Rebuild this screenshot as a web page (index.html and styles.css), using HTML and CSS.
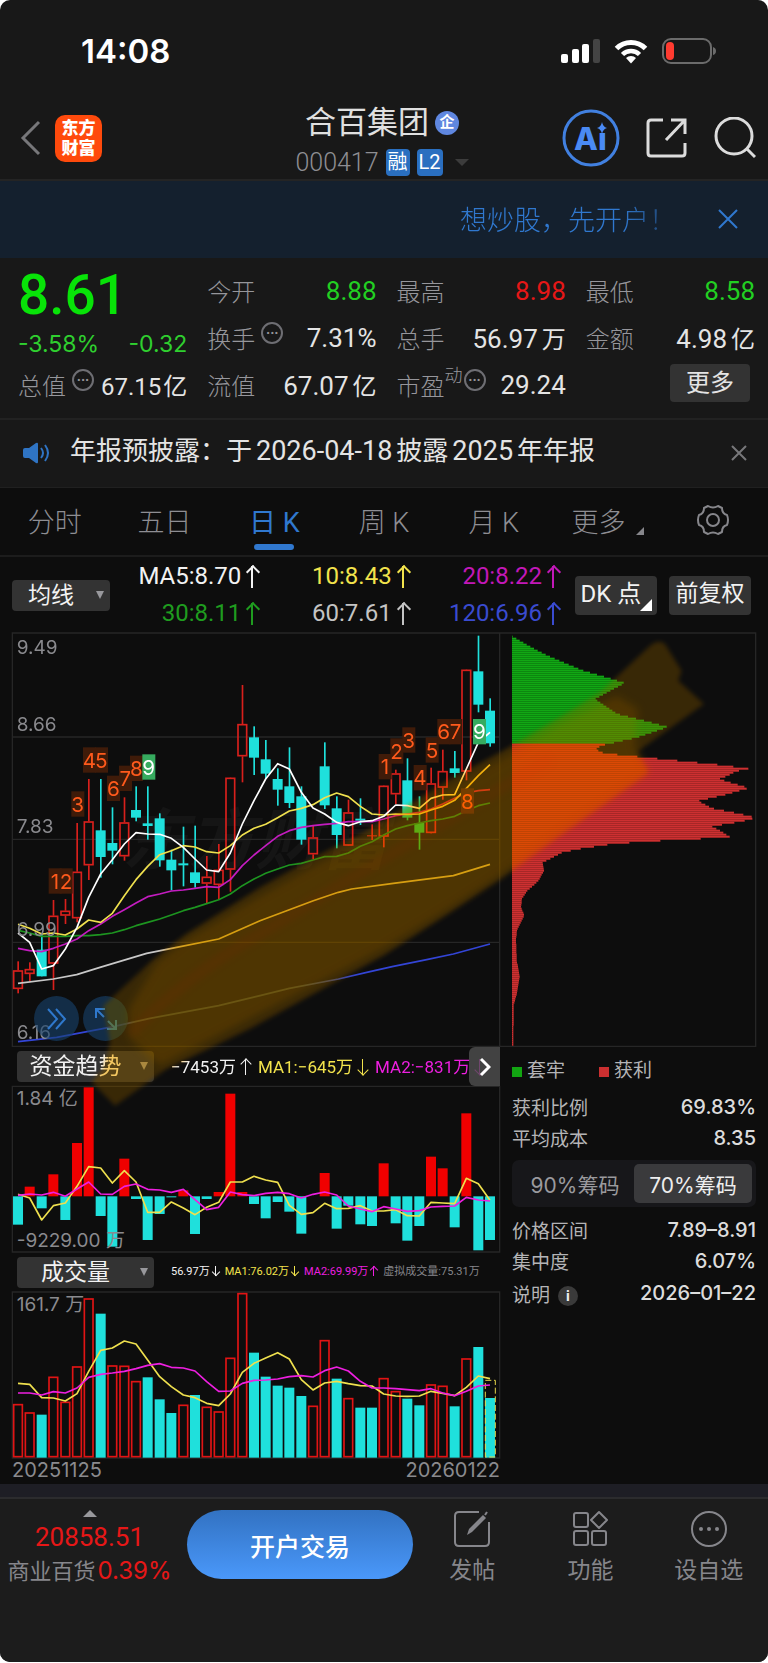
FILE: index.html
```
<!DOCTYPE html>
<html lang="zh-CN">
<head>
    <meta charset="UTF-8">
    <meta name="viewport" content="width=device-width, initial-scale=1.0">
    <title>合百集团 000417</title>
    <link rel="stylesheet" href="styles.css">
</head>
<body>
<div class="app">
    <div class="status-bar">
        <span class="time">14:08</span>
        <div class="status-icons">
            <svg width="39" height="25" viewBox="0 0 39 25" fill="#fff">
                <rect x="0" y="15" width="7" height="9" rx="2"/>
                <rect x="11" y="10" width="7" height="14" rx="2"/>
                <rect x="21" y="5" width="7" height="19" rx="2"/>
                <rect x="32" y="0" width="7" height="24" rx="2" fill="#444"/>
            </svg>
            <svg width="34" height="25" viewBox="0 0 34 25" fill="none" stroke="#fff" stroke-width="5">
                <path d="M2.500 9.500a20.500 20.500 0 0 1 29 0"/>
                <path d="M8.500 15.500a12 12 0 0 1 17 0" stroke-width="4.500"/>
                <path d="M17 24.500l-5-5.500a7 7 0 0 1 10 0z" fill="#fff" stroke="none"/>
            </svg>
            <svg width="54" height="26" viewBox="0 0 54 26">
                <rect x="1" y="1" width="48" height="24" rx="8" fill="none" stroke="#6b6b6b" stroke-width="2"/>
                <rect x="4" y="4" width="8" height="18" rx="4" fill="#ff3b30"/>
                <path d="M51 9q3 1 3 4t-3 4z" fill="#6b6b6b"/>
            </svg>
        </div>
    </div>

    <header class="header">
        <div class="header-left">
            <button class="icon-btn" aria-label="返回">
                <svg width="22" height="36" viewBox="0 0 22 36" fill="none" stroke="#77777a" stroke-width="3"><path d="M19 2L3 18l16 16"/></svg>
            </button>
            <a class="logo" href="#">东方<br>财富</a>
        </div>
        <div class="header-title">
            <h1>合百集团<span class="corp">企</span></h1>
            <div class="code">000417<span class="tag">融</span><span class="tag">L2</span><i class="tri-down"></i></div>
        </div>
        <div class="header-right">
            <button class="icon-btn" aria-label="智能助手">
                <svg width="58" height="58" viewBox="0 0 58 58">
                    <circle cx="29" cy="29" r="27" fill="none" stroke="#4180e0" stroke-width="3"/>
                    <text class="ai-text" x="12" y="41">Ai</text>
                    <rect x="35" y="12" width="12" height="11" fill="#181818"/>
                    <path d="M40 13q1 5 5 6q-4 1-5 6q-1-5-5-6q4-1 5-6z" fill="#4a8af4"/>
                </svg>
            </button>
            <button class="icon-btn" aria-label="分享">
                <svg width="42" height="42" viewBox="0 0 42 42" fill="none" stroke="#dcdcdc" stroke-width="3">
                    <path d="M17 3H5Q2 3 2 6v30q0 3 3 3h31q3 0 3-3V26M25 3h14v14M39 3L20 23"/>
                </svg>
            </button>
            <button class="icon-btn" aria-label="搜索">
                <svg width="42" height="42" viewBox="0 0 42 42" fill="none" stroke="#dcdcdc" stroke-width="3">
                    <circle cx="20" cy="19" r="18"/><path d="M33 32l8 8"/>
                </svg>
            </button>
        </div>
    </header>

    <div class="banner">
        <a href="#">想炒股，先开户！</a>
        <button class="icon-btn" aria-label="关闭">
            <svg width="20" height="20" viewBox="0 0 20 20" stroke="#3078cf" stroke-width="2"><path d="M1 1l18 18M19 1L1 19"/></svg>
        </button>
    </div>

    <section class="quote">
        <div class="quote-col">
            <div class="price">8.61</div>
            <div class="change"><span>-3.58%</span><span>-0.32</span></div>
            <div class="row small"><span class="label">总值<i class="dots">···</i></span><span>67.15<b>亿</b></span></div>
        </div>
        <div class="quote-col">
            <div class="row"><span class="label">今开</span><span class="down">8.88</span></div>
            <div class="row"><span class="label">换手<i class="dots">···</i></span><span>7.31%</span></div>
            <div class="row"><span class="label">流值</span><span>67.07<b>亿</b></span></div>
        </div>
        <div class="quote-col">
            <div class="row"><span class="label">最高</span><span class="up">8.98</span></div>
            <div class="row"><span class="label">总手</span><span>56.97<b>万</b></span></div>
            <div class="row"><span class="label">市盈<sup>动</sup><i class="dots">···</i></span><span>29.24</span></div>
        </div>
        <div class="quote-col">
            <div class="row"><span class="label">最低</span><span class="down">8.58</span></div>
            <div class="row"><span class="label">金额</span><span>4.98<b>亿</b></span></div>
            <div class="row end"><button class="more-btn">更多</button></div>
        </div>
    </section>

    <div class="notice">
        <svg width="27" height="22" viewBox="0 0 27 22" fill="#2f74c4">
            <path d="M0 8q0-2 2-2h4l7-5q2-1 2 1v18q0 2-2 1l-7-5H2q-2 0-2-2z"/>
            <path d="M18 6q4 5 0 10M22 3q6 8 0 16" fill="none" stroke="#2f74c4" stroke-width="2"/>
        </svg>
        <p>年报预披露：于<span class="n">2026-04-18</span>披露<span class="n">2025</span>年年报</p>
        <button class="icon-btn" aria-label="关闭">
            <svg width="16" height="16" viewBox="0 0 16 16" stroke="#77777a" stroke-width="2"><path d="M1 1l14 14M15 1L1 15"/></svg>
        </button>
    </div>

    <nav class="tabs">
        <button>分时</button>
        <button>五日</button>
        <button class="active">日 K</button>
        <button>周 K</button>
        <button>月 K</button>
        <button class="has-more">更多</button>
        <button aria-label="设置">
            <svg width="34" height="32" viewBox="0 0 34 32" fill="none" stroke="#86868b" stroke-width="2" stroke-linejoin="round">
                <path d="M12 2q5 3 10 0l4 2q0 6 5 7q2 5 0 10q-5 1-5 7l-4 2q-5-3-10 0l-4-2q0-6-5-7q-2-5 0-10q5-1 5-7z"/>
                <circle cx="17" cy="16" r="6"/>
            </svg>
        </button>
    </nav>

    <div class="ma-bar">
        <div class="drop drop-ma">
            <select aria-label="主图指标"><option>均线</option></select>
        </div>
        <div class="ma-list">
            <span class="c-white">MA5:8.70<i class="arr up-arr"></i></span>
            <span class="c-yellow">10:8.43<i class="arr up-arr"></i></span>
            <span class="c-purple">20:8.22<i class="arr up-arr"></i></span>
            <span class="c-green">30:8.11<i class="arr up-arr"></i></span>
            <span class="c-gray">60:7.61<i class="arr up-arr"></i></span>
            <span class="c-blue">120:6.96<i class="arr up-arr"></i></span>
        </div>
        <button class="ma-btn dk">DK 点</button>
        <button class="ma-btn">前复权</button>
    </div>

    <main class="charts">
        <div class="k-wrap">
            <svg id="kChart" class="chart" viewBox="36 12 2232 1242"></svg>
            <div class="float-btns">
                <button aria-label="展开">
                    <svg width="20" height="22" viewBox="0 0 20 22" fill="none" stroke="#2f78cc" stroke-width="2"><path d="M1 1l9 10L1 21M9 1l9 10-9 10"/></svg>
                </button>
                <button aria-label="全屏">
                    <svg width="24" height="24" viewBox="0 0 24 24" fill="none" stroke="#2f78cc" stroke-width="2"><path d="M2 11V2h9M2 2l8 8M22 13v9h-9M22 22l-8-8"/></svg>
                </button>
            </div>
        </div>

        <div class="lower">
            <div class="sub-charts">
                <div class="sub-head">
                    <div class="drop"><select aria-label="副图指标一"><option>资金趋势</option></select></div>
                    <div class="sub-vals">
                        <span class="c-white">−7453万<i class="arr up-arr"></i></span>
                        <span class="c-yellow">MA1:−645万<i class="arr down-arr"></i></span>
                        <span class="c-pink">MA2:−831万<i class="arr down-arr"></i></span>
                    </div>
                    <button class="next-btn" aria-label="下一个">
                        <svg width="12" height="20" viewBox="0 0 12 20" fill="none" stroke="#fff" stroke-width="3"><path d="M2 2l8 8-8 8"/></svg>
                    </button>
                </div>
                <svg id="fundChart" class="chart" viewBox="36 139 1464 500"></svg>
                <div class="sub-head">
                    <div class="drop"><select aria-label="副图指标二"><option>成交量</option></select></div>
                    <div class="sub-vals vol">
                        <span class="c-white">56.97万<i class="arr down-arr"></i></span>
                        <span class="c-yellow">MA1:76.02万<i class="arr down-arr"></i></span>
                        <span class="c-pink">MA2:69.99万<i class="arr up-arr"></i></span>
                        <span class="c-dim">虚拟成交量:75.31万</span>
                    </div>
                </div>
                <svg id="volChart" class="chart" viewBox="36 124 1464 500"></svg>
                <div class="dates"><span>20251125</span><span>20260122</span></div>
            </div>

            <aside class="chips">
                <div class="legend">
                    <span><i class="sq sq-green"></i>套牢</span>
                    <span><i class="sq sq-red"></i>获利</span>
                </div>
                <div class="chip-row"><span>获利比例</span><strong>69.83%</strong></div>
                <div class="chip-row"><span>平均成本</span><strong>8.35</strong></div>
                <div class="segment">
                    <button>90%筹码</button>
                    <button class="on">70%筹码</button>
                </div>
                <div class="chip-row"><span>价格区间</span><strong>7.89–8.91</strong></div>
                <div class="chip-row"><span>集中度</span><strong>6.07%</strong></div>
                <div class="chip-row last"><span>说明<i class="info">i</i></span><strong>2026–01–22</strong></div>
            </aside>
        </div>

        <!-- 荧光笔标注 -->
        <svg class="marker multiply" viewBox="36 12 2232 1440">
            <g id="brush">
                <path class="fringe" d="M310 1130L450 1000L560 915L780 775L950 680L1100 605L1350 450L1500 370L1680 265L1800 190L1950 50Q1975 30 1995 45L2045 125L2035 155L2112 225L1910 370L1945 430L1680 620L1500 750L1350 850L1150 980L750 1200L500 1320L345 1430L275 1360L310 1320L330 1240Z"/>
                <path class="core" d="M480 1310L385 1225L385 1140L470 1000L560 930L780 800L950 705L1100 630L1350 475L1530 375L1680 285L1850 200L1915 240L1905 355L1945 430L1680 610L1500 740L1350 838L1150 960L750 1170Z"/>
            </g>
        </svg>
        <svg class="marker screen" viewBox="36 12 2232 1440">
            <use href="#brush"/>
            <path class="streak" d="M390 1215Q560 1040 780 915L1150 690L1500 480L1650 390"/>
        </svg>
    </main>

    <footer class="footer">
        <a class="index" href="#">
            <i class="tri-up"></i>
            <span class="index-val">20858.51</span>
            <span class="index-name">商业百货<em>0.39%</em></span>
        </a>
        <button class="trade-btn">开户交易</button>
        <div class="actions">
            <button>
                <svg width="38" height="38" viewBox="0 0 38 38" fill="none" stroke="#86868b" stroke-width="2">
                    <path d="M26 2H6Q2 2 2 6v26q0 4 4 4h26q4 0 4-4V12"/>
                    <path d="M14 25l2-6L30 5l3 3-14 14z" fill="#86868b" stroke="none"/><path d="M32 5l2-3"/>
                </svg>
                发帖
            </button>
            <button>
                <svg width="38" height="38" viewBox="0 0 38 38" fill="none" stroke="#86868b" stroke-width="2">
                    <rect x="3" y="3" width="14" height="14" rx="2"/><rect x="3" y="21" width="14" height="14" rx="2"/>
                    <rect x="21" y="21" width="14" height="14" rx="2"/><path d="M28 2l8 8-8 8-8-8z" stroke-linejoin="round"/>
                </svg>
                功能
            </button>
            <button>
                <svg width="38" height="38" viewBox="0 0 38 38" fill="#86868b">
                    <circle cx="19" cy="19" r="17" fill="none" stroke="#86868b" stroke-width="2"/>
                    <circle cx="11" cy="19" r="2"/><circle cx="19" cy="19" r="2"/><circle cx="27" cy="19" r="2"/>
                </svg>
                设自选
            </button>
        </div>
    </footer>
</div>
<script src="script.js"></script>
</body>
</html>
```

FILE: styles.css
```
* {
    box-sizing: border-box;
}
body {
    margin: 0;
    background: #fff;
    font-family: Roboto, "Noto Sans CJK SC", sans-serif;
    color: #e4e4e4;
}
button, select {
    font: inherit;
    color: inherit;
    border: none;
    background: none;
    padding: 0;
    margin: 0;
    cursor: pointer;
}
a {
    color: inherit;
    text-decoration: none;
}
i, em {
    font-style: normal;
}
svg {
    display: block;
}
.app {
    background: #181818;
    border-radius: 10px;
    overflow: hidden;
}

/* 状态栏 */
.status-bar {
    display: flex;
    justify-content: space-between;
    align-items: center;
    height: 102px;
    padding: 0 52px 0 81px;
}
.time {
    font-family: Inter, sans-serif;
    font-size: 33px;
    font-weight: 600;
    color: #fff;
}
.status-icons {
    display: flex;
    align-items: center;
    gap: 14px;
}

/* 标题栏 */
.header {
    display: grid;
    grid-template-columns: 1fr auto 1fr;
    align-items: center;
    height: 79px;
    padding: 0 12px 0 8px;
    border-bottom: 2px solid #242424;
}
.icon-btn {
    display: flex;
}
.header-left {
    display: flex;
    align-items: center;
    gap: 13px;
    padding: 0 0 9px 12px;
}
.logo {
    width: 47px;
    height: 47px;
    border-radius: 10px;
    background: #ff4a0c;
    color: #fff;
    font-size: 17px;
    font-weight: 900;
    line-height: 20px;
    text-align: center;
    padding-top: 3px;
}
.header-title {
    padding-bottom: 3px;
    text-align: center;
}
.header-title h1 {
    display: flex;
    align-items: center;
    justify-content: center;
    gap: 6px;
    margin: 0;
    font-size: 31px;
    font-weight: 400;
    line-height: 42px;
    color: #e0e0e0;
}
.corp {
    width: 24px;
    height: 24px;
    border-radius: 50%;
    background: #5f87e0;
    color: #fff;
    font-size: 15px;
    font-weight: 700;
    line-height: 23px;
}
.code {
    display: flex;
    align-items: center;
    gap: 7px;
    height: 36px;
    font-size: 25px;
    font-weight: 300;
    color: #8e8e93;
}
.tag {
    height: 27px;
    padding: 0 2px;
    border-radius: 4px;
    background: #2a6fc0;
    color: #fff;
    font-size: 20px;
    font-weight: 400;
    line-height: 27px;
}
.tri-down {
    border: 7px solid transparent;
    border-top-color: #3c3c3c;
    border-bottom: none;
    margin-left: 5px;
}
.header-right {
    display: flex;
    justify-content: flex-end;
    align-items: center;
    gap: 26px;
    padding-bottom: 9px;
}
.ai-text {
    font-family: Inter, sans-serif;
    font-size: 31px;
    font-weight: 800;
    fill: #4a8af4;
}

.banner {
    display: flex;
    justify-content: flex-end;
    align-items: center;
    gap: 42px;
    height: 77px;
    padding: 0 30px 2px;
    background: #14202e;
    color: #3078cf;
    font-size: 27px;
    font-weight: 300;
}
.banner a {
    mask-image: linear-gradient(90deg, #000 75%, rgba(0, 0, 0, 0.3));
}

/* 行情 */
.quote {
    display: flex;
    gap: 20px;
    height: 160px;
    padding: 0 13px 0 18px;
}
.quote-col {
    flex: 1;
    padding-top: 9px;
    white-space: nowrap;
}
.price {
    height: 59px;
    font-size: 55px;
    font-weight: 500;
    line-height: 56px;
    color: #08e308;
}
.change {
    display: flex;
    justify-content: space-between;
    height: 35px;
    font-family: Inter, sans-serif;
    font-size: 23px;
    line-height: 36px;
    color: #2fcf2f;
}
.row {
    display: flex;
    justify-content: space-between;
    align-items: center;
    height: 47px;
    font-size: 26px;
    font-weight: 400;
}
.row.small {
    font-size: 24px;
}
.row.small b {
    margin-left: 2px;
}
.row.end {
    justify-content: flex-end;
    padding: 0 5px 3px 0;
}
.row b {
    margin-left: 4px;
    font-size: 24px;
    font-weight: 400;
}
.label {
    display: flex;
    align-items: center;
    font-size: 24px;
    font-weight: 300;
    color: #96969b;
}
.label sup {
    font-size: 18px;
    line-height: 18px;
    align-self: flex-start;
    vertical-align: top;
}
.dots {
    width: 22px;
    height: 22px;
    margin: 0 0 10px 6px;
    border: 2px solid #6e6e73;
    border-radius: 50%;
    font-size: 14px;
    font-weight: 700;
    line-height: 18px;
    text-align: center;
}
sup + .dots {
    margin-left: 1px;
}
.down {
    color: #22cf22;
}
.up {
    color: #e61717;
}
.more-btn {
    width: 80px;
    height: 38px;
    border-radius: 4px;
    background: #333;
    font-size: 24px;
    line-height: 36px;
}

.notice {
    display: flex;
    align-items: center;
    gap: 20px;
    height: 70px;
    padding: 0 21px 2px 23px;
    border-top: 2px solid #222;
    border-bottom: 1px solid #202020;
    font-size: 26px;
}
.notice p {
    flex: 1;
    margin: 0;
    line-height: 34px;
    padding-bottom: 3px;
}
.notice .n {
    margin: 0 4px;
    font-size: 27px;
}

/* 周期切换 */
.tabs {
    display: grid;
    grid-template-columns: repeat(7, 1fr);
    height: 69px;
    background: #0d0d0d;
    border-bottom: 2px solid #1c1c1c;
    color: #8e8e93;
    font-size: 27px;
    font-weight: 300;
}
.tabs button {
    position: relative;
    display: flex;
    justify-content: center;
    align-items: center;
    padding-bottom: 3px;
}
.tabs .active {
    color: #3078cf;
    font-weight: 400;
}
.tabs .active::after {
    content: "";
    position: absolute;
    bottom: 5px;
    width: 40px;
    height: 6px;
    border-radius: 3px;
    background: #3078cf;
}
.tabs .has-more {
    padding-right: 10px;
}
.has-more::after {
    content: "";
    position: absolute;
    right: 14px;
    bottom: 20px;
    border: 4px solid #86868b;
    border-top-color: transparent;
    border-left-color: transparent;
}

/* 均线 */
.ma-bar {
    display: flex;
    align-items: center;
    height: 76px;
    padding: 0 17px 0 12px;
    background: #0d0d0d;
}
.drop {
    position: relative;
    width: 137px;
    height: 31px;
    flex-shrink: 0;
}
.drop select {
    appearance: none;
    width: 100%;
    height: 100%;
    padding-right: 20px;
    border-radius: 4px;
    background: #333;
    color: #f2f2f2;
    font-size: 23px;
    line-height: 31px;
    text-align: center;
    text-align-last: center;
}
.drop::after {
    content: "";
    position: absolute;
    right: 6px;
    top: 11px;
    border: 4px solid transparent;
    border-top: 8px solid #98989c;
    border-bottom: none;
    pointer-events: none;
}
.drop-ma {
    width: 98px;
}
.ma-list {
    flex: 1;
    display: grid;
    grid-template-columns: repeat(3, 1fr);
    margin-right: 14px;
    font-size: 24px;
    line-height: 37px;
    text-align: right;
    white-space: nowrap;
}
.ma-btn {
    position: relative;
    width: 82px;
    height: 39px;
    border-radius: 4px;
    background: #333;
    color: #f2f2f2;
    font-size: 23px;
    line-height: 36px;
    padding-bottom: 2px;
}
.dk {
    margin-right: 12px;
    padding-right: 10px;
    font-size: 24px;
}
.dk::after {
    content: "";
    position: absolute;
    right: 5px;
    bottom: 4px;
    border: 6px solid #fff;
    border-top-color: transparent;
    border-left-color: transparent;
}
.arr {
    display: inline-block;
    position: relative;
    width: 2px;
    height: 22px;
    margin: 0 7px 0 10px;
    background: currentColor;
    vertical-align: -4px;
}
.arr::after {
    content: "";
    position: absolute;
    left: -3px;
    width: 8px;
    height: 8px;
    border: 2px solid currentColor;
}
.up-arr::after {
    top: 1px;
    border-right: none;
    border-bottom: none;
    transform: rotate(45deg);
}
.down-arr::after {
    bottom: 1px;
    border-left: none;
    border-top: none;
    transform: rotate(45deg);
}
.c-white { color: #f2f2f2; }
.c-yellow { color: #f2e34c; }
.c-purple { color: #c218b8; }
.c-green { color: #1f9c1f; }
.c-gray { color: #c4c4c4; }
.c-blue { color: #3a4bd0; }
.c-pink { color: #ee1fe0; }
.c-dim { color: #86868b; }

/* 图表区 */
.charts {
    position: relative;
    isolation: isolate;
    padding: 0 12px;
    background: #0d0d0d;
    border-bottom: 13px solid #1e1e25;
}
.chart {
    width: 100%;
    height: auto;
    overflow: visible;
    font-family: Inter, "Noto Sans CJK SC", sans-serif;
}
.k-wrap {
    position: relative;
}
.frame {
    fill: none;
    stroke: #262626;
    stroke-width: 4;
}
.axis {
    fill: #8a8a8e;
    font-size: 57px;
}
.watermark {
    fill: #151515;
    font-size: 200px;
    font-weight: 700;
    font-style: italic;
}
.count {
    font-size: 62px;
    text-anchor: middle;
}
.line {
    fill: none;
    stroke-width: 5;
    stroke-linejoin: round;
}
.float-btns {
    position: absolute;
    left: 22px;
    bottom: 6px;
    display: flex;
    gap: 4px;
}
.float-btns button {
    display: flex;
    align-items: center;
    justify-content: center;
    width: 45px;
    height: 45px;
    border-radius: 50%;
    background: rgba(24, 66, 110, 0.6);
}
.lower {
    display: grid;
    grid-template-columns: 488fr 256fr;
}
.sub-charts {
    min-width: 0;
}
.sub-head {
    position: relative;
    display: flex;
    align-items: center;
    height: 39px;
    padding-left: 5px;
}
.sub-vals {
    display: flex;
    gap: 6px;
    margin-left: 17px;
    overflow: hidden;
    font-size: 17px;
    line-height: 24px;
    white-space: nowrap;
}
.sub-vals .arr {
    width: 1px;
    height: 16px;
    margin: 0 6px 0 9px;
    vertical-align: -2px;
}
.sub-vals .arr::after {
    width: 7px;
    height: 7px;
    border-width: 1px;
}
.sub-vals.vol {
    gap: 5px;
    font-size: 11px;
}
.sub-vals.vol .arr {
    height: 10px;
    margin: 0 4px 0 5px;
    vertical-align: -1px;
}
.sub-vals.vol .arr::after {
    left: -2px;
    width: 5px;
    height: 5px;
}
.sub-head .drop select {
    font-size: 23px;
}
.next-btn {
    position: absolute;
    right: 0;
    top: 0;
    display: flex;
    align-items: center;
    justify-content: center;
    width: 31px;
    height: 39px;
    border-radius: 6px 0 0 6px;
    background: rgba(80, 80, 80, 0.8);
}
.dates {
    display: flex;
    justify-content: space-between;
    height: 26px;
    font-family: Inter, sans-serif;
    font-size: 20px;
    line-height: 24px;
    color: #8a8a8e;
}

/* 筹码 */
.chips {
    padding-left: 12px;
    font-size: 19px;
    color: #b4b4b6;
}
.legend {
    display: flex;
    gap: 34px;
    height: 44px;
    padding-bottom: 2px;
    align-items: center;
}
.sq {
    display: inline-block;
    width: 10px;
    height: 10px;
    margin-right: 5px;
}
.sq-green { background: #12a512; }
.sq-red { background: #cb2f30; }
.chip-row {
    display: flex;
    justify-content: space-between;
    align-items: center;
    height: 31px;
}
.chip-row.last {
    height: 34px;
}
.chip-row strong {
    font-family: Inter, sans-serif;
    font-size: 20px;
    font-weight: 500;
    color: #dcdcdc;
}
.info {
    display: inline-block;
    width: 20px;
    height: 20px;
    margin-left: 8px;
    border-radius: 50%;
    background: #3a3a3a;
    color: #eee;
    font-family: Inter, sans-serif;
    font-size: 14px;
    font-weight: 700;
    line-height: 20px;
    text-align: center;
    vertical-align: 1px;
}
.segment {
    display: flex;
    height: 47px;
    margin: 7px 0;
    padding: 4px;
    border-radius: 7px;
    background: #17171a;
}
.segment button {
    flex: 1;
    border-radius: 5px;
    font-family: Inter, "Noto Sans CJK SC", sans-serif;
    font-size: 21px;
    color: #9a9a9e;
}
.segment .on {
    background: #3a3a3c;
    color: #eee;
}

.marker {
    position: absolute;
    left: 12px;
    right: 12px;
    top: 0;
    pointer-events: none;
    overflow: visible;
}
.multiply {
    mix-blend-mode: multiply;
    fill: #ffa800;
}
.screen {
    mix-blend-mode: screen;
    fill: #4c3200;
}
.fringe {
    opacity: 0.6;
    filter: blur(6px);
}
.core {
    opacity: 0.8;
    filter: blur(12px);
}
.streak {
    fill: none;
    stroke: #5a2400;
    stroke-width: 34;
    opacity: 0.35;
    filter: blur(9px);
}

/* 底栏 */
.footer {
    display: flex;
    align-items: flex-start;
    height: 165px;
    padding-top: 11px;
    border-top: 2px solid #2c2c2e;
    background: #1c1c1c;
}
.index {
    display: flex;
    flex-direction: column;
    align-items: center;
    width: 177px;
    padding-left: 2px;
    margin-right: 10px;
}
.tri-up {
    margin-bottom: 4px;
    border: 7px solid transparent;
    border-bottom-color: #98989c;
    border-top: none;
}
.index-val {
    font-size: 26px;
    line-height: 32px;
    color: #e61717;
}
.index-name {
    font-size: 22px;
    line-height: 35px;
    color: #86868b;
    white-space: nowrap;
}
.index-name em {
    margin-left: 2px;
    font-family: Inter, sans-serif;
    font-size: 24px;
    color: #e61717;
}
.trade-btn {
    width: 226px;
    height: 69px;
    border-radius: 35px;
    background: linear-gradient(#3272c2, #4a98fa);
    color: #fff;
    font-size: 25px;
    font-weight: 500;
}
.actions {
    flex: 1;
    display: grid;
    grid-template-columns: repeat(3, 1fr);
}
.actions button {
    display: flex;
    flex-direction: column;
    align-items: center;
    gap: 6px;
    color: #86868b;
    font-size: 23px;
    line-height: 34px;
}
```

FILE: script.js
```
const RED = '#d8201c';
const CYAN = '#1fe0dc';
const STEP = 35.4;
const BAR = 30;

// [最高, 实体上沿, 实体下沿, 最低, 涨跌]
const candles = [
    [997,1024,1080,1093,1],[1000,1020,1035,1057,1],[917,962,1042,1042,0],[813,860,1004,1083,1],[810,845,860,885,1],
    [582,728,868,880,1],[450,577,709,753,1],[450,604,684,746,0],[535,642,665,706,0],[505,580,682,695,1],
    [472,543,566,577,0],[472,583,591,632,0],[553,568,694,713,0],[662,692,724,784,0],[593,703,709,772,0],
    [590,730,762,776,0],[681,743,764,823,1],[645,722,768,812,1],[446,446,722,788,1],[168,285,382,460,1],
    [292,325,386,438,0],[333,391,434,450,0],[418,450,482,530,0],[355,472,522,537,0],[472,502,632,647,0],
    [588,625,676,690,1],[340,412,529,540,0],[502,538,618,658,0],[512,550,650,650,1],[508,569,575,588,0],
    [586,619,622,633,1],[470,470,623,655,1],[422,433,496,525,1],[388,454,566,574,0],[502,582,611,662,0],
    [416,463,612,612,1],[362,426,476,512,1],[366,418,432,446,0],[122,122,428,454,1],[20,127,227,250,0],[208,245,343,353,0]
];
const ma5 = [912,940,1020,1010,960,895,805,735,692,645,611,615,616,628,655,690,723,728,672,585,515,450,404,420,490,537,555,580,590,578,575,562,528,530,538,508,498,497,420,340,310];
const ma10 = [886,898,915,912,918,900,873,880,853,800,752,712,677,665,650,654,668,672,650,618,598,586,566,546,538,527,506,492,503,532,555,558,555,556,555,543,532,514,478,440,407];
const ma20 = [958,965,968,958,945,930,905,885,862,842,822,803,795,786,783,778,773,775,752,710,678,650,622,605,595,590,586,583,578,578,578,570,560,555,550,540,525,508,492,485,482];
const ma30 = [904,912,922,922,922,920,920,917,912,902,890,880,870,858,845,835,824,812,795,770,750,733,720,708,703,693,683,682,672,652,638,618,600,590,582,575,570,562,545,530,522];
const ma60 = [[54,1063],[160,1050],[230,1037],[300,1015],[440,973],[530,955],[656,930],[780,875],[868,842],[940,815],[1015,790],[1055,780],[1180,763],[1360,740],[1470,706]];
const ma120 = [[54,1238],[170,1225],[340,1193],[450,1168],[656,1130],[780,1100],[868,1078],[1015,1050],[1110,1028],[1180,1012],[1280,992],[1360,975],[1470,945]];

// 九转标记 [数字, x, y]
const counts = [
    ['1',165,718],['2',198,718],['3',233,487],['4',268,355],['5',304,355],['6',340,440],['7',376,410],['8',409,380],['9',446,376],
    ['1',1155,375],['2',1190,328],['3',1226,295],['4',1260,408],['5',1296,325],['6',1331,270],['7',1367,270],['8',1402,478],['9',1438,270]
];

// 筹码分布 [y, 宽度]
const chipRows = [
    [20,0],[45,44],[72,94],[98,154],[123,214],[143,284],[159,336],[207,247],[252,314],[272,394],[291,466],[322,374],[338,304],[347,264],
    [358,249],[370,274],[380,374],[395,524],[405,624],[416,707],[424,669],[438,644],[447,619],[458,654],[474,709],[495,634],[513,556],
    [535,599],[552,684],[563,730],[575,684],[589,597],[603,624],[622,654],[630,474],[641,304],[656,204],[667,149],[698,90],[722,94],
    [754,76],[782,44],[806,28],[830,25],[857,35],[897,14],[925,10],[990,12],[1040,21],[1085,14],[1125,3],[1247,2]
];

const fund = [555,441,506,404,541,310,143,529,621,357,478,601,523,473,452,583,478,457,162,457,493,536,487,516,582,470,400,567,498,554,559,371,551,603,559,351,386,563,221,632,601];
const fundMa1 = [464,475,541,498,490,440,381,385,430,393,427,518,518,487,505,525,503,488,427,427,410,421,428,497,524,519,491,507,506,498,514,514,510,528,529,488,490,492,416,432,482];
const fundMa2 = [467,463,466,458,470,448,427,463,464,440,433,449,451,458,449,480,510,503,457,465,468,461,458,462,475,464,457,466,499,508,516,501,508,515,513,502,500,499,473,481,484];

const vol = [460,485,492,378,453,347,143,189,344,345,391,380,446,487,462,433,468,482,321,127,306,378,405,411,436,465,268,384,442,471,471,382,421,444,464,401,405,467,323,289,442];
const volUp = '11011110111000101111000001101001100110100';
const volMa1 = [398,401,441,442,451,429,362,299,292,271,280,328,378,408,433,441,458,465,430,365,338,322,306,325,387,418,397,392,399,405,406,430,436,437,436,422,428,435,410,376,384];
const volMa2 = [427,427,433,423,427,412,380,371,367,362,354,344,339,350,352,361,393,422,421,398,389,388,385,378,375,379,360,349,361,392,412,412,414,417,420,414,427,435,422,406,403];

function xAt(i) {
    return Math.round(54 + i * STEP);
}

function rect(x, y, w, h, attrs) {
    return `<rect x="${x}" y="${y}" width="${w}" height="${Math.max(h, 1)}" ${attrs}/>`;
}

function line(data, color) {
    const pts = data.map((p, i) => Array.isArray(p) ? p.join() : xAt(i) + ',' + p).join(' ');
    return `<polyline class="line" points="${pts}" stroke="${color}"/>`;
}

function hollow(x, top, bottom, color) {
    return rect(x - 13, top + 2, 26, bottom - top - 4, `fill="none" stroke="${color}" stroke-width="5"`);
}

function text(x, y, str) {
    return `<text class="axis" x="${x}" y="${y}">${str}</text>`;
}

function drawK() {
    let s = '<text class="watermark" x="365" y="705">东方财富</text>';
    s += '<path class="frame" d="M37 12H2267V1252H37ZM1499 12V1252M37 324H1499M37 631H1499M37 940H1499"/>';
    candles.forEach(([high, top, bottom, low, up], i) => {
        const x = xAt(i);
        const c = up ? RED : CYAN;
        if (up && bottom - top > 8) {
            s += rect(x - 2, high, 5, top - high, `fill="${c}"`) + rect(x - 2, bottom, 5, low - bottom, `fill="${c}"`);
            s += hollow(x, top, bottom, c);
        } else {
            s += rect(x - 2, high, 5, low - high, `fill="${c}"`) + rect(x - 15, top, BAR, bottom - top, `fill="${c}"`);
        }
    });
    s += line(ma120, '#3345d6') + line(ma60, '#c8c8c8') + line(ma30, '#1d9420') + line(ma20, '#c41cc0');
    s += line(ma10, '#efe04e') + line(ma5, '#ffffff');
    counts.forEach(([n, x, y]) => {
        const nine = n === '9';
        s += rect(x - 19, y, 39, 76, `fill="${nine ? '#36ab5f' : '#3f1b09'}"`);
        s += `<text class="count" x="${x}" y="${y + 61}" fill="${nine ? '#fff' : '#ff5a1c'}">${n}</text>`;
    });
    s += text(50, 76, '9.49') + text(50, 305, '8.66') + text(50, 612, '7.83') + text(50, 921, '6.99') + text(50, 1231, '6.16');

    // 右侧筹码峰
    for (let y = 20; y < 1247; y += 6) {
        const k = chipRows.findIndex(p => p[0] > y);
        const [y0, w0] = chipRows[k - 1];
        const [y1, w1] = chipRows[k];
        const w = Math.round(w0 + (w1 - w0) * (y - y0) / (y1 - y0)) + 2;
        const green = y < 344;
        s += rect(1536, y, w, 6, `fill="${green ? '#11a714' : '#cd3031'}"`);
        s += rect(1536, y + 5, w, 1, `fill="${green ? '#0c8010' : '#a82426'}"`);
    }
    document.getElementById('kChart').innerHTML = s;
}

function drawFund() {
    let s = '<path class="frame" d="M37 140H1499V637H37Z"/>';
    fund.forEach((y, i) => {
        if (y === 470) return;
        s += y < 470 ? rect(xAt(i) - 15, y, BAR, 470 - y, 'fill="#f00000"') : rect(xAt(i) - 15, 470, BAR, y - 470, `fill="${CYAN}"`);
    });
    s += line(fundMa1, '#efe04e') + line(fundMa2, '#ee1fe0');
    s += text(50, 197, '1.84 亿') + text(50, 623, '-9229.00 万');
    document.getElementById('fundChart').innerHTML = s;
}

function drawVol() {
    let s = '<path class="frame" d="M37 124H1499V622H37Z"/>';
    s += text(50, 182, '161.7 万');
    vol.forEach((y, i) => {
        s += volUp[i] === '1' ? hollow(xAt(i), y, 620, '#e01414') : rect(xAt(i) - 15, y, BAR, 621 - y, `fill="${CYAN}"`);
    });
    s += rect(1456, 389, 30, 230, 'fill="none" stroke="#e8d84a" stroke-width="3" stroke-dasharray="18 8"');
    s += line(volMa1, '#efe04e') + line(volMa2, '#ee1fe0');
    document.getElementById('volChart').innerHTML = s;
}

drawK();
drawFund();
drawVol();
```
